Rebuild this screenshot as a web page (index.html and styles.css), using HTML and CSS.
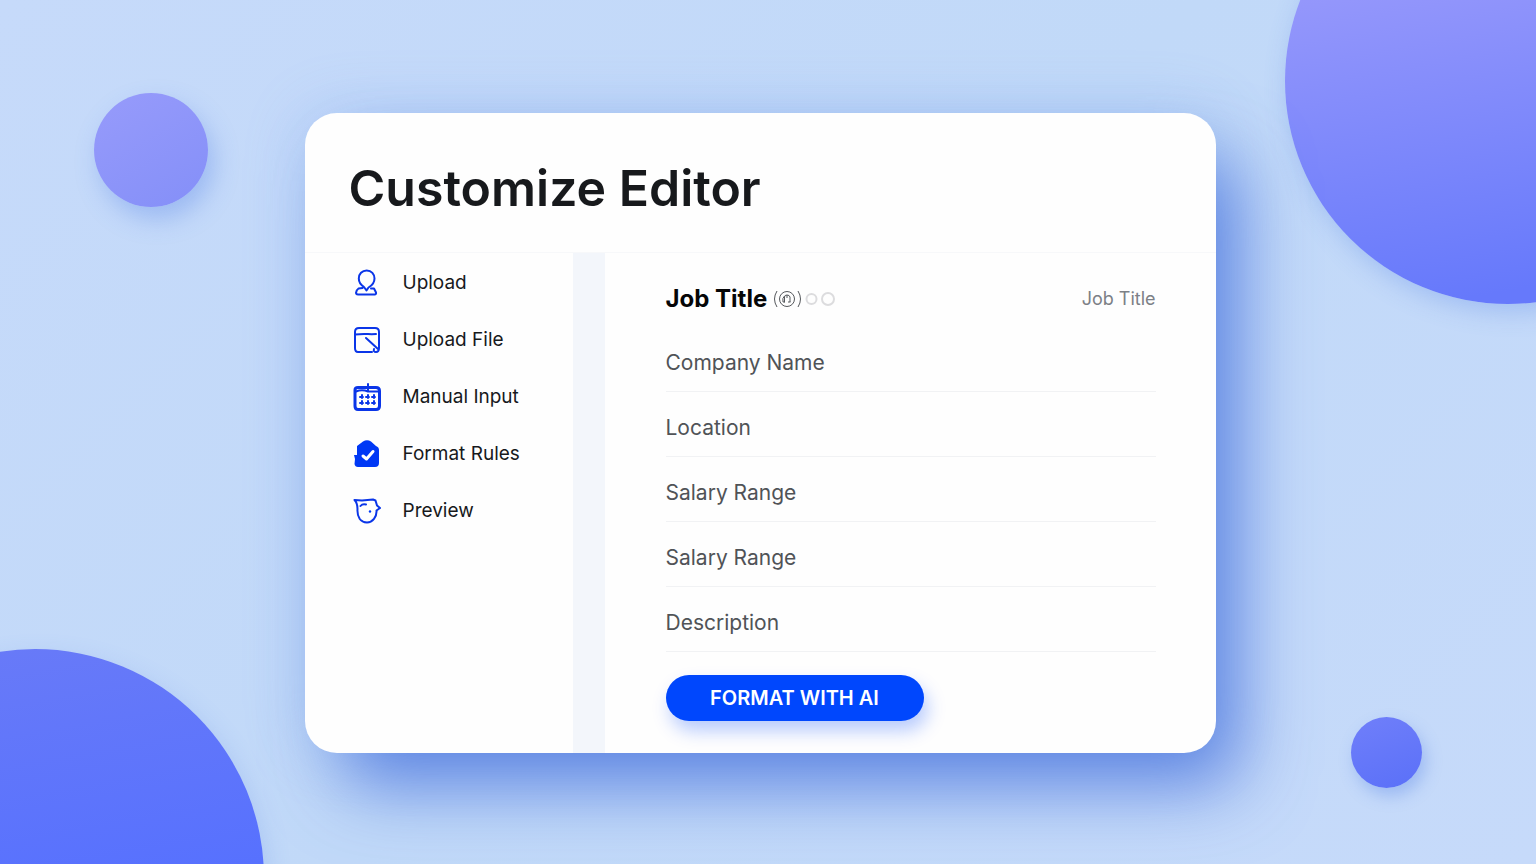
FILE: index.html
```html
<!DOCTYPE html>
<html lang="en">
<head>
    <meta charset="UTF-8">
    <meta name="viewport" content="width=device-width, initial-scale=1.0">
    <title>Customize Editor</title>
    <link rel="stylesheet" href="styles.css">
</head>
<body>
    <div class="backdrop">
        <div class="circle circle-top-left"></div>
        <div class="circle circle-top-right"></div>
        <div class="circle circle-bottom-left"></div>
        <div class="circle circle-bottom-right"></div>
    </div>

    <main class="card">
        <header class="card-header">
            <h1>Customize Editor</h1>
        </header>
        <div class="card-body">
            <nav class="sidebar">
                <a href="#upload" class="nav-item">
                    <svg class="nav-icon" viewBox="0 0 28 28">
                        <path d="M11 18C8 16 5.800 13 5.800 9.500C5.800 5 9 1.500 13.700 1.500C18.500 1.500 21.500 5 21.500 9.500C21.500 13.500 19 16.500 15.500 18.500L13.500 21.500L11 18M9.500 19L5.500 19.500C4 20.500 3.200 22.500 3 24Q3.200 25.500 5 25.500H21.500Q23.500 25.200 23 23.500L21 19.500L18 19.500"/>
                    </svg>
                    <span>Upload</span>
                </a>
                <a href="#upload-file" class="nav-item">
                    <svg class="nav-icon" viewBox="0 0 28 28">
                        <path d="M19 26H5Q2 26 2 22V6Q2 2 6 2H22Q26 2 26 6V22Q26 26 23 26Q20 26 21 23M2 8.500C9 7.500 18 8.500 23 8M13 12L25 23"/>
                    </svg>
                    <span>Upload File</span>
                </a>
                <a href="#manual-input" class="nav-item">
                    <svg class="nav-icon" viewBox="0 0 28 28">
                        <path class="thick" d="M5 4.500H23Q26.500 4.500 26.500 8V23Q26.500 26.500 23 26.500H5Q2 26.500 2 23V7Q2 4.500 5 4.500Z"/>
                        <path d="M3 8.500Q9 6 15 8.500H25M15 1V8"/>
                        <path class="keys" d="M7 14H10M13 14H16M19 14H22M7 20H10M13 20H16M19 20H22M9 12V15M15 12V15M21 12V15M9 18V21M15 18V21M21 18V21"/>
                    </svg>
                    <span>Manual Input</span>
                </a>
                <a href="#format-rules" class="nav-item">
                    <svg class="nav-icon" viewBox="0 0 28 28">
                        <path class="solid" d="M4 6L10 1.500Q14-1 18 1.500L23 6Q26 7 26 10V23Q26 27 22 27H5Q2 27 1.500 24L2 19L1 15H4Z"/>
                        <path class="check" d="M10 16L13.500 19L20 11.500"/>
                    </svg>
                    <span>Format Rules</span>
                </a>
                <a href="#preview" class="nav-item">
                    <svg class="nav-icon" viewBox="0 0 28 28">
                        <path d="M1.500 3L9 3.500L20 2.500L22.500 3.500L24 8.500L27 11L23.500 13.500C24 20 19.500 25.500 14 25.500C7.500 25 4 20 4.500 12C4.500 8 3.500 5 1.500 3ZM7.500 9Q9.500 6.500 13 7.500"/>
                        <circle class="solid" cx="17" cy="14.500" r="1.200"/>
                    </svg>
                    <span>Preview</span>
                </a>
            </nav>

            <form class="editor">
                <div class="editor-header">
                    <h2>Job Title</h2>
                    <svg class="title-marks" viewBox="0 0 64 20">
                        <path d="M5 2Q0 10 5 18M26 2Q31 10 26 18"/>
                        <circle cx="15" cy="10" r="7.500"/>
                        <path d="M12.500 13.500V8Q12.500 6 15 6T18 8V13M12.500 13H11Q10 9 12.500 7M16 13H18.500M15 6V9"/>
                        <circle class="pale" cx="39.500" cy="10" r="5"/>
                        <circle class="pale" cx="56" cy="10" r="6"/>
                    </svg>
                    <span class="hint">Job Title</span>
                </div>
                <div class="field">
                    <label for="company">Company Name</label>
                    <input type="text" id="company">
                </div>
                <div class="field">
                    <label for="location">Location</label>
                    <input type="text" id="location">
                </div>
                <div class="field">
                    <label for="salary-min">Salary Range</label>
                    <input type="text" id="salary-min">
                </div>
                <div class="field">
                    <label for="salary-max">Salary Range</label>
                    <input type="text" id="salary-max">
                </div>
                <div class="field">
                    <label for="description">Description</label>
                    <input type="text" id="description">
                </div>
                <button type="button">FORMAT WITH AI</button>
            </form>
        </div>
    </main>
</body>
</html>
```
FILE: styles.css
```css
* {
    box-sizing: border-box;
    margin: 0;
    padding: 0;
}

body {
    font-family: Inter, "Liberation Sans", sans-serif;
    min-height: 100vh;
    display: flex;
    justify-content: center;
    align-items: center;
    padding: 26px 40px 24px 24px;
    background: linear-gradient(135deg, #c6dafa, #c1d9f8 50%, #c6dafa);
    position: relative;
}

/* Background circles */
.backdrop {
    position: absolute;
    inset: 0;
    overflow: hidden;
}

.circle {
    position: absolute;
    border-radius: 50%;
}

.circle-top-left {
    top: 93px;
    left: 94px;
    width: 114px;
    height: 114px;
    background: linear-gradient(150deg, #979bfb, #848ff8);
    box-shadow: 6px 12px 24px rgba(80, 125, 230, 0.35);
}

.circle-top-right {
    top: -142px;
    right: -195px;
    width: 446px;
    height: 446px;
    background: linear-gradient(170deg, #9698fb 25%, #6679fb 90%);
    box-shadow: 4px 8px 24px rgba(80, 125, 230, 0.3);
}

.circle-bottom-left {
    bottom: -243px;
    left: -194px;
    width: 458px;
    height: 458px;
    background: linear-gradient(170deg, #6a7bf7, #5570ff 60%);
    box-shadow: 4px 8px 24px rgba(80, 125, 230, 0.2);
}

.circle-bottom-right {
    bottom: 76px;
    right: 114px;
    width: 71px;
    height: 71px;
    background: linear-gradient(160deg, #707ffa, #5a70f8);
    box-shadow: 4px 8px 16px rgba(80, 125, 230, 0.35);
}

.card {
    position: relative;
    width: 100%;
    max-width: 911px;
    background: #fefefe;
    border-radius: 32px;
    overflow: hidden;
    box-shadow: 30px 40px 72px -8px rgba(66, 110, 220, 0.78),
        0 0 60px rgba(130, 170, 240, 0.3);
}

.card-header {
    padding: 40px 44px 29px;
}

h1 {
    color: #17191c;
    font-size: 50px;
    font-weight: 600;
    line-height: 70px;
}

.card-body {
    display: flex;
    border-top: 1px solid #f7f8fa;
}

/* Sidebar */
.sidebar {
    width: 300px;
    padding: 1px 32px 0 48px;
    border-right: 32px solid #f3f6fb;
}

.nav-item {
    display: flex;
    align-items: center;
    gap: 22px;
    height: 57px;
    color: #17191c;
    font-size: 19px;
    text-decoration: none;
    white-space: nowrap;
}

.nav-icon {
    width: 28px;
    height: 28px;
    flex-shrink: 0;
    fill: none;
    stroke: #0a35e8;
    stroke-width: 2;
    stroke-linecap: round;
    stroke-linejoin: round;
}

.nav-icon .thick {
    stroke-width: 3;
}

.nav-icon .keys {
    stroke-width: 2;
}

.nav-icon .solid {
    fill: #0038f5;
    stroke: none;
}

.nav-icon .check {
    stroke: #ffffff;
    stroke-width: 3;
}

/* Editor form */
.editor {
    flex: 1;
    padding: 17px 60px 32px 61px;
}

.editor-header {
    display: flex;
    align-items: center;
    gap: 5px;
    height: 57px;
}

h2 {
    color: #050607;
    font-size: 24px;
    font-weight: 700;
}

.title-marks {
    width: 64px;
    height: 20px;
    fill: none;
    stroke: #55585c;
    stroke-width: 1;
}

.title-marks .pale {
    stroke: #dcdcde;
    stroke-width: 2;
}

.hint {
    margin-left: auto;
    color: #7c8086;
    font-size: 18px;
}

.field {
    display: flex;
    align-items: center;
    gap: 16px;
    height: 65px;
    padding-top: 6px;
    border-bottom: 1px solid #f1f2f4;
}

.field label {
    color: #505357;
    font-size: 21px;
}

.field input {
    flex: 1;
    min-width: 0;
    height: 32px;
    border: none;
    outline: none;
    background: transparent;
    font: inherit;
    font-size: 21px;
}

button {
    display: block;
    width: 258px;
    height: 46px;
    margin-top: 23px;
    border: none;
    border-radius: 23px;
    background: #0047fd;
    color: #ffffff;
    font-family: inherit;
    font-size: 20px;
    font-weight: 600;
    cursor: pointer;
    box-shadow: 4px 10px 18px rgba(0, 71, 253, 0.28);
}
```
